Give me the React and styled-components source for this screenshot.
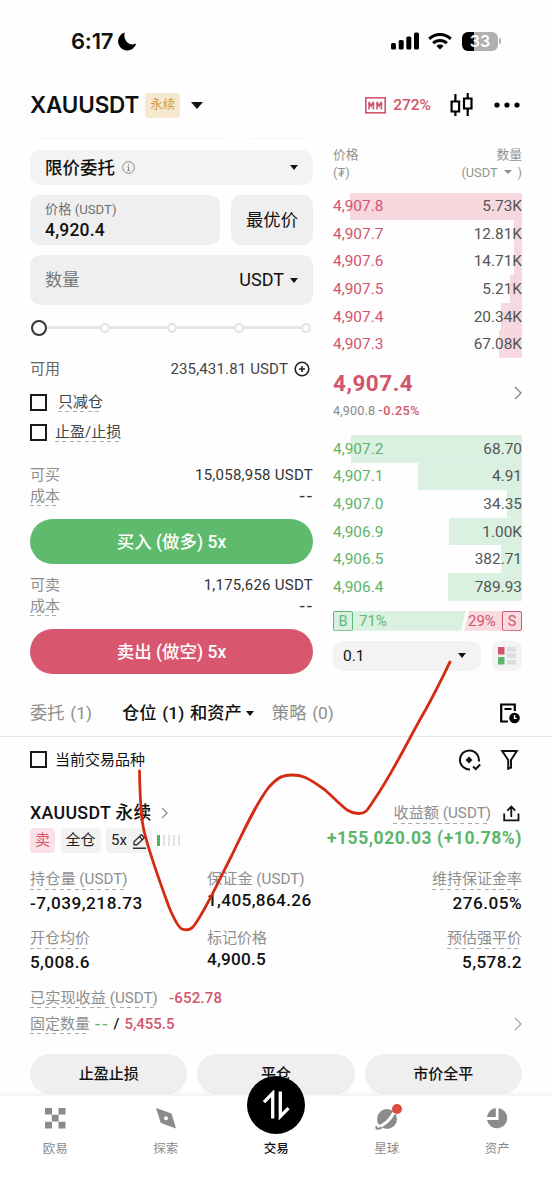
import styled, { createGlobalStyle } from 'styled-components';

const red = '#d2546d';
const green = '#5cb56b';
const gray = '#8e8e8e';

const GlobalStyle = createGlobalStyle`
  * {
    box-sizing: border-box;
  }
  body {
    margin: 0;
    background: #fff;
    font-family: Roboto, 'Noto Sans CJK SC', sans-serif;
  }
`;

const Screen = styled.div`
  position: relative;
  display: flex;
  flex-direction: column;
  width: 552px;
  height: 1200px;
  overflow: hidden;
  background: #fefefe;
  color: #111;
`;

const Text = styled.span`
  display: inline-block;
  font-size: ${({ $size }) => $size || 15}px;
  font-weight: ${({ $weight }) => $weight || 400};
  color: ${({ $color }) => $color || 'inherit'};
  letter-spacing: ${({ $spacing }) => $spacing || 0}px;
  line-height: 20px;
  white-space: nowrap;
`;

const Dashed = styled(Text)`
  line-height: ${({ $line }) => $line || 20}px;
  background: repeating-linear-gradient(
      90deg,
      ${({ $dash }) => $dash || '#aaa'} 0 4px,
      transparent 4px 7.5px
    )
    left bottom / calc(100% - 1px) 1px no-repeat;
`;

const Dashes = styled(Text)`
  font-size: 19px;
  letter-spacing: 2px;
  margin-right: -1px;
`;

const StatusBar = styled.header`
  display: flex;
  align-items: center;
  justify-content: space-between;
  height: 82px;
  padding: 0 51px 0 71px;
`;

const Group = styled.div`
  display: flex;
  align-items: center;
  gap: ${({ $gap }) => $gap || 0}px;
`;

const Clock = styled(Text)`
  font-family: Inter, sans-serif;
`;

const Battery = styled.div`
  display: flex;
  align-items: center;
  justify-content: center;
  width: 36px;
  height: 19px;
  border-radius: 6px;
  background: linear-gradient(90deg, #000 12px, #b0b0b0 12px);
  color: #fff;
  font: 600 16px/19px Inter, sans-serif;
`;

const BatteryTip = styled.div`
  width: 2px;
  height: 6px;
  margin-left: 1px;
  border-radius: 0 2px 2px 0;
  background: #b0b0b0;
`;

const SymbolBar = styled.div`
  display: flex;
  align-items: center;
  justify-content: space-between;
  height: 46px;
  padding: 0 32px 0 30px;
`;

const Symbol = styled(Text)`
  font-family: Inter, sans-serif;
`;

const Margin = styled(Text)`
  margin: 0 19px 0 7px;
`;

const PerpTag = styled.div`
  margin: 0 11px 0 6px;
  width: 35px;
  height: 25px;
  border-radius: 4px;
  background: #f6e8cf;
  color: #cf9c3c;
  font-size: 12.5px;
  line-height: 24px;
  text-align: center;
`;

const Arrow = styled.i`
  border: ${({ $size }) => $size || 4.5}px solid transparent;
  border-top: ${({ $size }) => ($size || 4.5) * 1.2}px solid ${({ $color }) => $color || '#111'};
  border-bottom: 0;
`;

const Hairlines = styled.div`
  display: grid;
  grid-template-columns: 186px 54px;
  gap: 26px;
  height: 22px;
  padding: 10px 0 0 38px;
  &::before,
  &::after {
    content: '';
    height: 1px;
    background: #f4f4f4;
  }
`;

const Trade = styled.main`
  display: grid;
  grid-template-columns: 283px 189px;
  gap: 20px;
  height: 538px;
  padding: 0 30px;
`;

const Column = styled.section`
  display: flex;
  flex-direction: column;
`;

const Field = styled.div`
  display: flex;
  align-items: center;
  justify-content: space-between;
  height: ${({ $height }) => $height || 50}px;
  padding: 0 15px;
  border-radius: 10px;
  background: ${({ $tone }) => $tone || '#efefef'};
`;

const PriceRow = styled.div`
  display: grid;
  grid-template-columns: 190px 82px;
  gap: 11px;
  margin: 10px 0;
`;

const PriceField = styled(Field)`
  flex-direction: column;
  align-items: flex-start;
  justify-content: center;
`;

const BestPrice = styled(Field)`
  justify-content: center;
  padding: 0;
`;

const Slider = styled.div`
  display: flex;
  align-items: center;
  height: 45px;
  padding-right: 2.5px;
`;

const Thumb = styled.div`
  width: 16px;
  height: 16px;
  margin-left: 1px;
  border: 2.5px solid #333;
  border-radius: 50%;
`;

const Track = styled.div`
  flex: ${({ $first }) => ($first ? 52.5 : 57)};
  height: 3px;
  background: #e6e6e6;
`;

const Stop = styled.div`
  width: 10px;
  height: 10px;
  border: 2px solid #e2e2e2;
  border-radius: 50%;
`;

const Line = styled.div`
  display: flex;
  align-items: center;
  justify-content: space-between;
  height: ${({ $height }) => $height}px;
  margin-top: ${({ $top }) => $top || 0}px;
`;

const CheckLine = styled.label`
  display: flex;
  align-items: center;
  gap: ${({ $gap }) => $gap || 8}px;
  height: 30px;
`;

const Box = styled.span`
  width: 17px;
  height: 17px;
  border: 2px solid #1a1a1a;
`;

const OrderButton = styled.button`
  height: 45px;
  flex: none;
  margin-top: 13px;
  border: 0;
  border-radius: 23px;
  background: ${({ $color }) => $color};
  color: #fff;
  font: 500 17.5px/45px Roboto, 'Noto Sans CJK SC', sans-serif;
`;

const BookHead = styled.div`
  display: flex;
  justify-content: space-between;
  height: 46.5px;
  margin-top: -4px;
  color: #929292;
  font-size: 12.8px;
  line-height: 17.5px;
`;

const HeadCell = styled.div`
  text-align: ${({ $align }) => $align || 'left'};
`;

const BookRow = styled.div`
  display: flex;
  align-items: center;
  justify-content: space-between;
  height: 27.6px;
  background: linear-gradient(${({ $bar }) => $bar}, ${({ $bar }) => $bar}) right / ${({ $depth }) => $depth}px
    100% no-repeat;
`;

const LastPrice = styled.div`
  display: flex;
  align-items: center;
  justify-content: space-between;
  height: 77px;
  padding-bottom: 8px;
`;

const BigPrice = styled(Text)`
  line-height: 36px;
`;

const Stack = styled.div`
  display: flex;
  flex-direction: column;
  align-items: ${({ $align }) => $align || 'flex-start'};
`;

const Ratio = styled.div`
  display: flex;
  height: 20px;
  margin: 10px 0;
`;

const Side = styled.div`
  display: flex;
  align-items: center;
  justify-content: space-between;
  width: ${({ $width }) => $width}px;
  margin-left: ${({ $pull }) => $pull || 0}px;
  padding-left: ${({ $inset }) => $inset || 0}px;
  clip-path: ${({ $clip }) => $clip};
  background: ${({ $bar }) => $bar};
  color: ${({ $color }) => $color};
`;

const SideLetter = styled.b`
  width: 20px;
  height: 20px;
  border: 1px solid currentColor;
  border-radius: 2px;
  font-size: 14.5px;
  font-weight: 400;
  line-height: 19px;
  text-align: center;
`;

const BookFooter = styled.div`
  display: grid;
  grid-template-columns: 148px 30px;
  gap: 11px;
`;

const StepField = styled(Field)`
  padding: 0 15px 0 10px;
`;

const DepthButton = styled.div`
  display: flex;
  align-items: center;
  justify-content: center;
  height: 30px;
  border-radius: 8px;
  background: #f3f3f3;
`;

const Tabs = styled.nav`
  display: flex;
  align-items: center;
  height: 49px;
  padding: 2px 32px 0 30px;
  border-bottom: 1px solid #e8e8e8;
`;

const Tab = styled(Text)`
  margin-left: ${({ $left }) => $left || 0}px;
  margin-right: ${({ $gap }) => $gap || 0}px;
  word-spacing: 1.5px;
`;

const Tail = styled.div`
  margin-left: auto;
  display: flex;
  gap: 18px;
`;

const FilterBar = styled.div`
  display: flex;
  align-items: center;
  height: 45px;
  padding: 0 33.5px 0 30px;
`;

const Position = styled.section`
  display: flex;
  flex-direction: column;
  height: 314px;
  padding: 19px 30px 0;
`;

const Tag = styled.span`
  display: flex;
  align-items: center;
  gap: 5px;
  height: 25px;
  padding: 0 5px;
  border-radius: 4px;
  background: ${({ $tone }) => $tone || '#f2f2f2'};
  color: ${({ $color }) => $color || '#222'};
  font-size: 15px;
  line-height: 25px;
`;

const Profit = styled(Text)`
  margin-top: -5px;
`;

const Pips = styled.div`
  display: flex;
  gap: 3px;
`;

const Pip = styled.i`
  width: ${({ $on }) => ($on ? 2.5 : 2)}px;
  height: 11px;
  background: ${({ $on }) => ($on ? '#4fb261' : '#e2e2e2')};
`;

const Metrics = styled.div`
  display: grid;
  grid-template-columns: 177px 1fr auto;
  grid-template-rows: 59px 58px;
  margin-top: 13px;
`;

const Metric = styled(Stack)`
  gap: ${({ $plain }) => ($plain ? 1 : 3)}px;
`;

const Actions = styled.div`
  display: grid;
  grid-template-columns: repeat(3, 1fr);
  gap: 10px;
  margin-top: 17px;
`;

const Action = styled.button`
  height: 40px;
  border: 0;
  border-radius: 20px;
  background: #efefef;
  color: #111;
  font: 500 15px/38px Roboto, 'Noto Sans CJK SC', sans-serif;
`;

const BottomNav = styled.footer`
  position: relative;
  display: grid;
  grid-template-columns: repeat(5, 110.5px);
  height: 104px;
  background: #fff;
  box-shadow: 0 -2px 5px rgba(0, 0, 0, 0.06);
`;

const NavItem = styled.div`
  display: flex;
  flex-direction: column;
  align-items: center;
  justify-content: space-between;
  height: 63px;
  padding-top: 8px;
  color: ${({ $active }) => ($active ? '#111' : '#8b8b8b')};
`;

const TradeIcon = styled.div`
  display: grid;
  place-items: center;
  width: 58px;
  height: 58px;
  margin-top: -28px;
  border-radius: 50%;
  background: #000;
`;

// freehand marker stroke lying over the page
const Scribble = styled.svg`
  position: absolute;
  inset: 0;
  pointer-events: none;
`;

const asks = [
  ['4,907.8', '5.73K', 172.5],
  ['4,907.7', '12.81K', 8],
  ['4,907.6', '14.71K', 8],
  ['4,907.5', '5.21K', 12],
  ['4,907.4', '20.34K', 21],
  ['4,907.3', '67.08K', 23],
];

const bids = [
  ['4,907.2', '68.70', 171.5],
  ['4,907.1', '4.91', 104],
  ['4,907.0', '34.35', 15],
  ['4,906.9', '1.00K', 73],
  ['4,906.5', '382.71', 21],
  ['4,906.4', '789.93', 74],
];

function Chevron({ width = 8, height = 14, color = '#888' }) {
  return (
    <svg width={width} height={height} viewBox="0 0 8 14" fill="none" stroke={color} strokeWidth="1.4">
      <path d="M1 1l6 6-6 6" />
    </svg>
  );
}

function StatusIcons() {
  return (
    <Group>
      <Group $gap={9}>
        <svg width="28" height="18" viewBox="0 0 28 18">
          <rect x="0" y="11" width="5" height="6.5" rx="1.5" />
          <rect x="7.7" y="8" width="5" height="9.5" rx="1.5" />
          <rect x="15.3" y="4.5" width="5" height="13" rx="1.5" />
          <rect x="23" y="0.5" width="5" height="17" rx="1.5" />
        </svg>
        <svg width="25" height="18" viewBox="0 0 25 18" fill="none" stroke="#000" strokeWidth="3">
          <path d="M1.2 6.9a15.3 15.3 0 0 1 21.6 0" />
          <path d="M5.2 11.2a9.6 9.6 0 0 1 13.6 0" />
          <path d="M12 17.6l-3.6-3.7a5.1 5.1 0 0 1 7.2 0z" fill="#000" stroke="none" />
        </svg>
        <Battery>33</Battery>
      </Group>
      <BatteryTip />
    </Group>
  );
}

function OrderForm() {
  return (
    <Column>
      <Field $height={35} $tone="#f3f3f3">
        <Group $gap={7}>
          <Text $size={17.5} $weight={500}>限价委托</Text>
          <svg width="13" height="13" viewBox="0 0 13 13" fill="none" stroke="#888">
            <circle cx="6.5" cy="6.5" r="5.8" />
            <path d="M6.5 5.6v4.2M6.5 3v1.3M5.4 5.8h1.2M5.2 9.6h2.6" />
          </svg>
        </Group>
        <Arrow />
      </Field>
      <PriceRow>
        <PriceField>
          <Text $size={13.2} $color="#707070">价格 (USDT)</Text>
          <Text $size={17.5} $weight={500} $spacing={0.2}>4,920.4</Text>
        </PriceField>
        <BestPrice>
          <Text $size={17.3}>最优价</Text>
        </BestPrice>
      </PriceRow>
      <Field>
        <Text $size={17.3} $color="#777">数量</Text>
        <Group $gap={6}>
          <Text $size={18}>USDT</Text>
          <Arrow />
        </Group>
      </Field>
      <Slider>
        <Thumb />
        {[1, 2, 3, 4].map((n) => [<Track key={`t${n}`} $first={n === 1} />, <Stop key={`s${n}`} />])}
      </Slider>
      <Line $height={37}>
        <Text $color="#666">可用</Text>
        <Group $gap={6}>
          <Text $color="#444" $spacing={0.15}>235,431.81 USDT</Text>
          <svg width="19" height="16" viewBox="0 0 19 16" fill="none" stroke="#222" strokeWidth="1.6">
            <circle cx="8" cy="8" r="6.8" />
            <path d="M8 5v6M5 8h6" />
          </svg>
        </Group>
      </Line>
      <CheckLine $gap={11}>
        <Box />
        <Dashed $color="#444">只减仓</Dashed>
      </CheckLine>
      <CheckLine>
        <Box />
        <Dashed $color="#444">止盈/止损</Dashed>
      </CheckLine>
      <Line $height={20} $top={18}>
        <Text $color={gray}>可买</Text>
        <Text $color="#333" $spacing={0.25}>15,058,958 USDT</Text>
      </Line>
      <Line $height={21}>
        <Dashed $color={gray}>成本</Dashed>
        <Dashes $color="#333">--</Dashes>
      </Line>
      <OrderButton $color="#5eba6c">买入 (做多) 5x</OrderButton>
      <Line $height={20} $top={11}>
        <Text $color={gray}>可卖</Text>
        <Text $color="#333" $spacing={0.25}>1,175,626 USDT</Text>
      </Line>
      <Line $height={21}>
        <Dashed $color={gray}>成本</Dashed>
        <Dashes $color="#333">--</Dashes>
      </Line>
      <OrderButton $color="#d9566f">卖出 (做空) 5x</OrderButton>
    </Column>
  );
}

function OrderBook() {
  return (
    <Column>
      <BookHead>
        <HeadCell>
          价格
          <br />(₮)
        </HeadCell>
        <HeadCell $align="right">
          数量
          <Group $gap={6}>
            (USDT <Arrow $size={4} $color="#8e8e8e" /> )
          </Group>
        </HeadCell>
      </BookHead>
      {asks.map(([price, amount, depth]) => (
        <BookRow key={price} $bar="#f6d8de" $depth={depth}>
          <Text $size={15.4} $color={red}>{price}</Text>
          <Text $size={15.4} $color="#555">{amount}</Text>
        </BookRow>
      ))}
      <LastPrice>
        <Stack>
          <BigPrice $size={22.5} $weight={700} $color={red} $spacing={0.5}>4,907.4</BigPrice>
          <Text $size={12.6} $color="#888" $spacing={0.15}>
            4,900.8 <Text $size={12.6} $weight={500} $color={red} $spacing={0.5}>-0.25%</Text>
          </Text>
        </Stack>
        <Chevron />
      </LastPrice>
      {bids.map(([price, amount, depth]) => (
        <BookRow key={price} $bar="#daf0e0" $depth={depth}>
          <Text $size={15.4} $color={green}>{price}</Text>
          <Text $size={15.4} $color="#555">{amount}</Text>
        </BookRow>
      ))}
      <Ratio>
        <Side $width={133} $bar="#daf0e0" $color="#62b878" $clip="polygon(0 0, 100% 0, calc(100% - 5px) 100%, 0 100%)">
          <Group $gap={6}>
            <SideLetter>B</SideLetter>
            <Text>71%</Text>
          </Group>
        </Side>
        <Side $width={58} $pull={-2} $inset={4} $bar="#f8dbe1" $color={red} $clip="polygon(5px 0, 100% 0, 100% 100%, 0 100%)">
          <Text>29%</Text>
          <SideLetter>S</SideLetter>
        </Side>
      </Ratio>
      <BookFooter>
        <StepField $height={30} $tone="#f3f3f3">
          <Text $size={15.5}>0.1</Text>
          <Arrow />
        </StepField>
        <DepthButton>
          <svg width="18" height="18" viewBox="0 0 18 18">
            <rect width="6.5" height="7.5" fill="#d2546d" />
            <rect y="10" width="6.5" height="7.5" fill="#5cb56b" />
            <path d="M9 0h9v4.5H9zM9 6.5h9V11H9zM9 13h9v4.5H9z" fill="#dcdcdc" />
          </svg>
        </DepthButton>
      </BookFooter>
    </Column>
  );
}

function OpenPosition() {
  return (
    <Position>
      <Line $height={24}>
        <Group $gap={9}>
          <Text $size={17.8} $weight={500} $spacing={0.3}>XAUUSDT 永续</Text>
          <Chevron width={7} height={12} />
        </Group>
        <Group $gap={12}>
          <Dashed $size={15.2} $color={gray} $line={21}>收益额 (USDT)</Dashed>
          <svg width="19" height="17" viewBox="0 0 19 17" fill="none" stroke="#111" strokeWidth="1.8">
            <path d="M1.2 8.5v6.8h14.3V8.5M8.3 12V1.8M4.3 5.6l4-4 4 4" />
          </svg>
        </Group>
      </Line>
      <Line $height={31}>
        <Group $gap={5.5}>
          <Tag $tone="#fbe0e6" $color={red}>卖</Tag>
          <Tag>全仓</Tag>
          <Tag>
            5x
            <svg width="15" height="16" viewBox="0 0 15 16" fill="none" stroke="#333" strokeWidth="1.4">
              <path d="M1 15.3h13M2 11.8v-3l7.4-7 3 3-7.4 7zM7.5 3.8l3 3" />
            </svg>
          </Tag>
          <Pips>
            <Pip $on />
            <Pip />
            <Pip />
            <Pip />
            <Pip />
          </Pips>
        </Group>
        <Profit $size={17.5} $weight={700} $color={green} $spacing={0.55}>+155,020.03 (+10.78%)</Profit>
      </Line>
      <Metrics>
        <Metric>
          <Dashed $size={15.2} $color={gray} $line={21}>持仓量 (USDT)</Dashed>
          <Text $size={17.2} $weight={500} $spacing={0.5}>-7,039,218.73</Text>
        </Metric>
        <Metric $plain>
          <Text $size={15.2} $color={gray}>保证金 (USDT)</Text>
          <Text $size={17.2} $weight={500} $spacing={0.35}>1,405,864.26</Text>
        </Metric>
        <Metric $align="flex-end">
          <Dashed $color={gray} $line={21}>维持保证金率</Dashed>
          <Text $size={17.2} $weight={500} $spacing={0.45}>276.05%</Text>
        </Metric>
        <Metric>
          <Dashed $color={gray} $line={21}>开仓均价</Dashed>
          <Text $size={17.2} $weight={500} $spacing={0.35}>5,008.6</Text>
        </Metric>
        <Metric $plain>
          <Text $color={gray}>标记价格</Text>
          <Text $size={17.2} $weight={500} $spacing={0.2}>4,900.5</Text>
        </Metric>
        <Metric $align="flex-end">
          <Dashed $color={gray} $line={21}>预估强平价</Dashed>
          <Text $size={17.2} $weight={500} $spacing={0.35}>5,578.2</Text>
        </Metric>
      </Metrics>
      <Line $height={24}>
        <Group $gap={11}>
          <Dashed $size={15.2} $color={gray}>已实现收益 (USDT)</Dashed>
          <Text $color={red} $weight={500} $spacing={0.2}>-652.78</Text>
        </Group>
      </Line>
      <Line $height={27}>
        <Group $gap={5}>
          <Dashed $color={gray}>固定数量</Dashed>
          <Dashes $color={green}>--</Dashes>
          <Text $weight={500}>/</Text>
          <Text $color={red} $weight={500}>5,455.5</Text>
        </Group>
        <Chevron color="#aaa" />
      </Line>
      <Actions>
        <Action>止盈止损</Action>
        <Action>平仓</Action>
        <Action>市价全平</Action>
      </Actions>
    </Position>
  );
}

function Navigation() {
  return (
    <BottomNav>
      <NavItem>
        <svg width="28" height="28" viewBox="-4 -4 28 28" fill="#8b8b8b">
          <path d="M0 0h7v6.5H0zM13.5 0h7v6.5h-7zM6.8 6.8h6.8v6.8H6.8zM0 13.8h7v6.7H0zM13.5 13.8h7v6.7h-7z" />
        </svg>
        <Text $size={12.5}>欧易</Text>
      </NavItem>
      <NavItem>
        <svg width="28" height="28" viewBox="-4 -4 28 28" fill="#8b8b8b">
          <path d="M0 0l15.5 5.5L20 20.5 4.8 15z" />
          <circle cx="10" cy="10.3" r="2" fill="#fff" />
        </svg>
        <Text $size={12.5}>探索</Text>
      </NavItem>
      <NavItem $active>
        <TradeIcon>
          <svg width="28" height="30" viewBox="0 0 28 30" fill="none" stroke="#fff" strokeWidth="3.3">
            <path d="M2 12.2l8.7-9V28.5M18.3 1.5v25l8.2-8.3" />
          </svg>
        </TradeIcon>
        <Text $size={12.5} $weight={500}>交易</Text>
      </NavItem>
      <NavItem>
        <svg width="30" height="30" viewBox="-5 -5 30 30">
          <circle cx="10" cy="10" r="10" fill="#8b8b8b" />
          <path d="M0 18.5C7 16.5 13 11 17 3.5" stroke="#fff" strokeWidth="3" fill="none" />
          <path d="M-0.3 17.2c-1.4 3.2 1.3 3.3 5 1.3" stroke="#8b8b8b" strokeWidth="2" fill="none" />
          <circle cx="20" cy="0" r="5" fill="#dc4b40" />
        </svg>
        <Text $size={12.5}>星球</Text>
      </NavItem>
      <NavItem>
        <svg width="28" height="28" viewBox="-4 -4 28 28" fill="#8b8b8b">
          <path d="M11.5 0A10.2 10.2 0 1 1 0 12h11.5zM8.8 0v9H0A10 10 0 0 1 8.8 0z" />
        </svg>
        <Text $size={12.5}>资产</Text>
      </NavItem>
    </BottomNav>
  );
}

export default function App() {
  return (
    <Screen>
      <GlobalStyle />
      <StatusBar>
        <Group $gap={5}>
          <Clock $size={22} $weight={600} $spacing={-0.2}>6:17</Clock>
          <svg width="19" height="19" viewBox="0 0 19 19">
            <path d="M6.8 0.5A9.2 9.2 0 1 0 18.2 11.6C12 14.5 4.5 9 6.8 0.5z" />
          </svg>
        </Group>
        <StatusIcons />
      </StatusBar>
      <SymbolBar>
        <Group>
          <Symbol $size={22.5} $weight={600} $spacing={-0.15}>XAUUSDT</Symbol>
          <PerpTag>永续</PerpTag>
          <Arrow $size={6} />
        </Group>
        <Group>
          <svg width="21" height="17" viewBox="0 0 21 17" fill="none" stroke="#d2546d" strokeWidth="1.6">
            <rect x="0.8" y="0.8" width="19.4" height="15" />
            <path d="M4 12.5V5l2.2 4L8.4 5v7.5M12 12.5V5l2.2 4 2.2-4v7.5" />
          </svg>
          <Margin $size={15.5} $weight={500} $color={red}>272%</Margin>
          <Group $gap={20}>
            <svg width="24" height="24" viewBox="0 0 24 24" fill="none" stroke="#000" strokeWidth="2.2">
              <path d="M1.6 8.5h7.5v10H1.6zM14 5.5h7.5v10H14zM5.4 1v7M5.4 18.5V23M17.7 0v5M17.7 15.5V23" />
            </svg>
            <svg width="26" height="6" viewBox="0 0 26 6">
              <circle cx="3" cy="3" r="2.6" />
              <circle cx="13" cy="3" r="2.6" />
              <circle cx="23" cy="3" r="2.6" />
            </svg>
          </Group>
        </Group>
      </SymbolBar>
      <Hairlines />
      <Trade>
        <OrderForm />
        <OrderBook />
      </Trade>
      <Tabs>
        <Tab $size={17.3} $color={gray} $gap={30}>委托 (1)</Tab>
        <Tab $size={17.3} $weight={500} $gap={4}>仓位 (1) 和资产</Tab>
        <Arrow />
        <Tab $size={17.3} $color={gray} $left={18}>策略 (0)</Tab>
        <Tail>
          <svg width="21" height="21" viewBox="0 0 21 21" fill="none" stroke="#000" strokeWidth="2.2">
            <path d="M9 18.5H2.2v-17h13.6V8M5.5 6h7" />
            <circle cx="15.5" cy="15" r="5.3" fill="#000" stroke="none" />
            <path d="M15.5 12v3.4h2.3" stroke="#fff" strokeWidth="1.4" />
          </svg>
        </Tail>
      </Tabs>
      <FilterBar>
        <Group $gap={8}>
          <Box />
          <Text>当前交易品种</Text>
        </Group>
        <Tail>
          <svg width="24" height="22" viewBox="0 0 24 22" fill="none" stroke="#111" strokeWidth="2">
            <path d="M20.8 12.5A9.5 9.5 0 1 0 12 20.4" />
            <path d="M11 7.5l3.5 3.5-3.5 3.5L7.5 11z" fill="#111" stroke="none" />
            <path d="M15 17.5l2.7 2.5 4.5-4.5" />
          </svg>
          <svg width="19" height="21" viewBox="0 0 19 21" fill="none" stroke="#111" strokeWidth="2">
            <path d="M2.2 2h14.6L11 11v7.5l-2.8 1.2V11z" />
          </svg>
        </Tail>
      </FilterBar>
      <OpenPosition />
      <Navigation />
      <Scribble width="552" height="1200" viewBox="0 0 552 1200" fill="none">
        <path
          d="M139.5 771C140 800 141 818 144 831C150 855 162 888 169 907C174 919 178 927 182 929C186 930.5 190 930 193 927C205 912 219 880 232 855C244 830 257 802 269 787C279 776 284 775 292 775C301 775 306 776 325 790C344 807 347 813 358 813.5C366 813.5 367 811 374 800C394 771 408 740 426 709C438 687 444 674 450 662"
          stroke="#d52b12"
          strokeWidth="2.8"
          strokeLinecap="round"
        />
      </Scribble>
    </Screen>
  );
}
